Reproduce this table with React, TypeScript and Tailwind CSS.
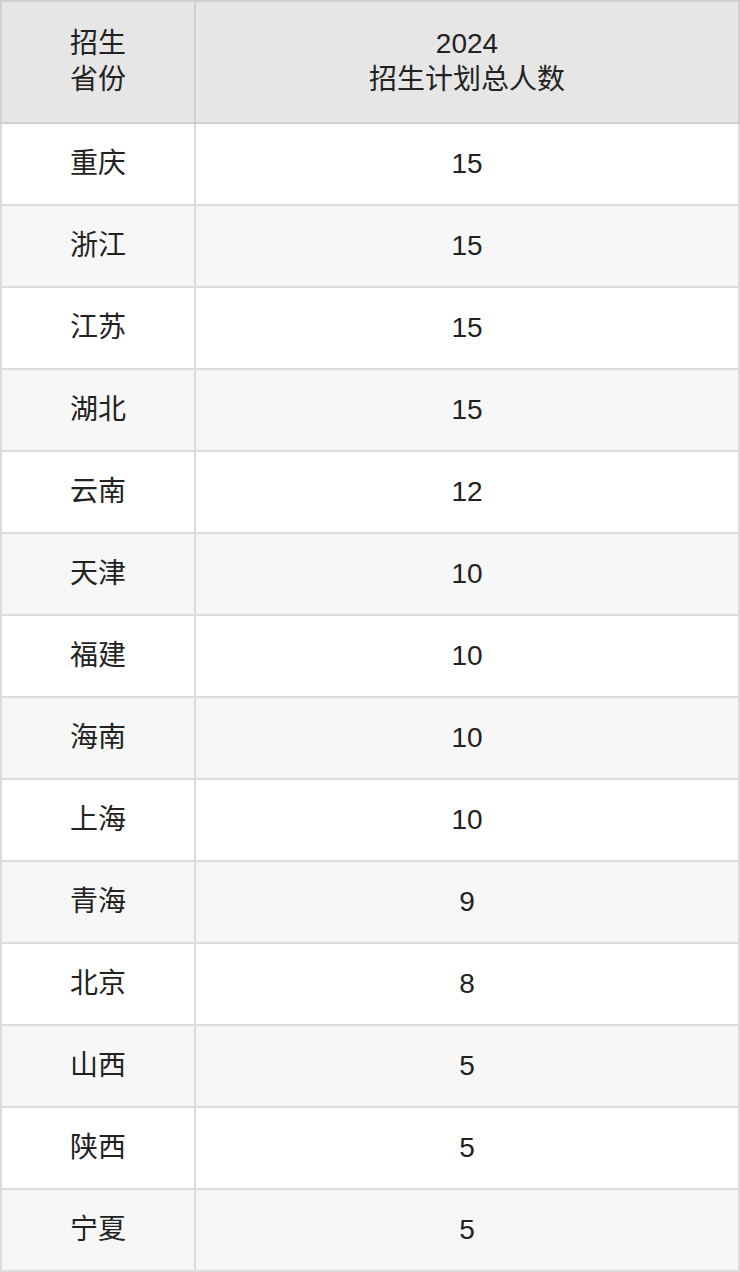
const rows: [string, string][] = [
  ['重庆', '15'],
  ['浙江', '15'],
  ['江苏', '15'],
  ['湖北', '15'],
  ['云南', '12'],
  ['天津', '10'],
  ['福建', '10'],
  ['海南', '10'],
  ['上海', '10'],
  ['青海', '9'],
  ['北京', '8'],
  ['山西', '5'],
  ['陕西', '5'],
  ['宁夏', '5'],
];

const font = { fontFamily: '"Liberation Sans", "Noto Sans CJK SC", sans-serif' };

export default function App() {
  return (
    <div className="w-[740px] bg-white text-[28px] text-[#222]" style={font}>
      {/* Header */}
      <div className="flex h-[124px] bg-[#e6e6e6] border-2 border-[#d0d0d0]">
        <div className="w-[194px] flex flex-col items-center justify-center leading-[36px] border-r-2 border-[#d0d0d0]">
          <span>招生</span>
          <span>省份</span>
        </div>
        <div className="flex-1 flex flex-col items-center justify-center leading-[36px]">
          <span>2024</span>
          <span>招生计划总人数</span>
        </div>
      </div>

      {/* Body */}
      {rows.map(([prov, num], i) => (
        <div
          key={prov}
          className={`flex h-[82px] border-x-2 border-b-2 border-[#dcdcdc] ${
            i % 2 === 1 ? 'bg-[#f7f7f7]' : 'bg-white'
          }`}
        >
          <div className="w-[194px] flex items-center justify-center border-r-2 border-[#dcdcdc]">
            {prov}
          </div>
          <div className="flex-1 flex items-center justify-center">{num}</div>
        </div>
      ))}
    </div>
  );
}
